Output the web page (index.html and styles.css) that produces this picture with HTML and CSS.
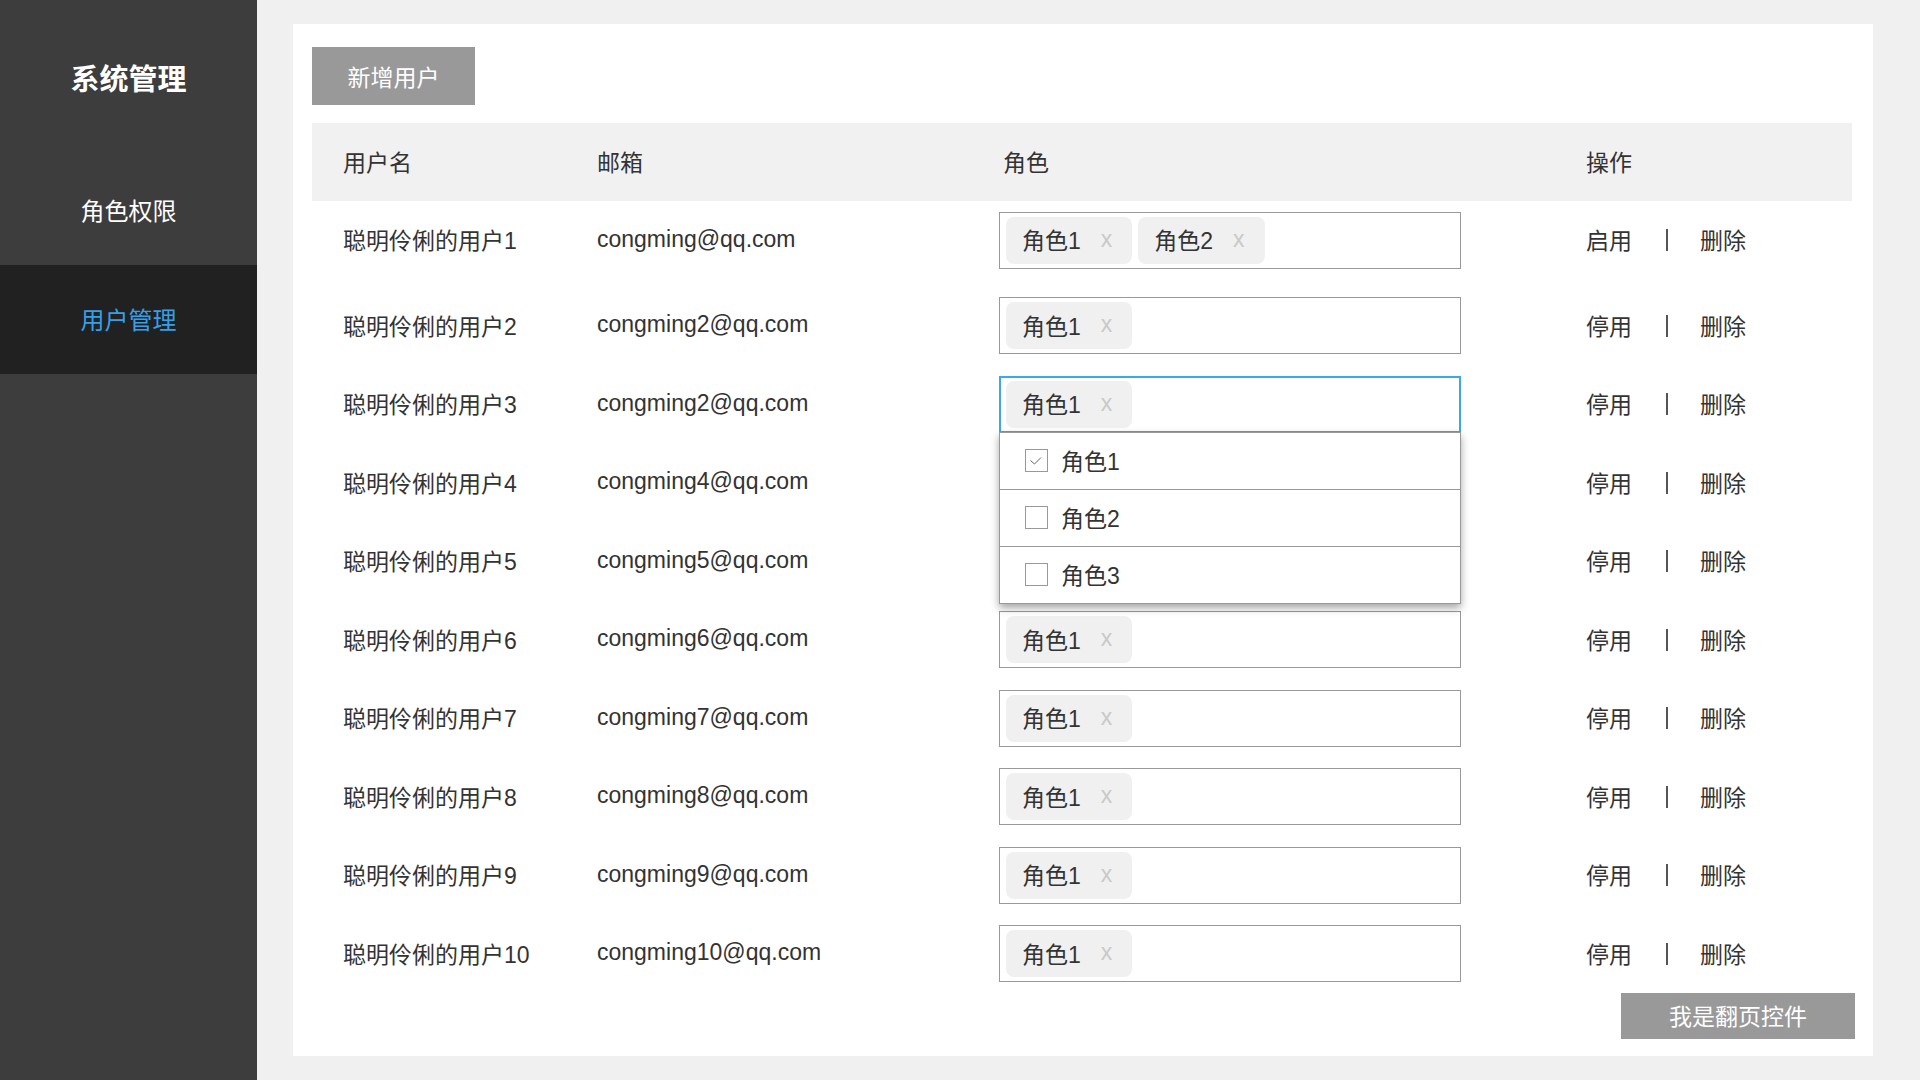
FILE: index.html
```html
<!DOCTYPE html>
<html lang="zh-CN">
<head>
  <meta charset="UTF-8"/>
  <meta name="viewport" content="width=device-width, initial-scale=1.0"/>
  <title>系统管理 - 用户管理</title>
  <link rel="stylesheet" href="styles.css">
</head>
<body>
  <aside class="sidebar">
    <div class="brand">系统管理</div>
    <div class="nav-item">角色权限</div>
    <div class="nav-item active">用户管理</div>
  </aside>

  <main class="content">
    <div class="card">
      <button class="btn-add">新增用户</button>

      <div class="table">
        <div class="row head">
          <div>用户名</div>
          <div>邮箱</div>
          <div class="role-head">角色</div>
          <div>操作</div>
        </div>

        <div class="row first">
          <div>聪明伶俐的用户1</div>
          <div>congming@qq.com</div>
          <div class="select">
            <span class="tag">角色1<i>x</i></span>
            <span class="tag">角色2<i>x</i></span>
          </div>
          <div class="ops"><span>启用</span><span class="sep"></span><span>删除</span></div>
        </div>

        <div class="row">
          <div>聪明伶俐的用户2</div>
          <div>congming2@qq.com</div>
          <div class="select"><span class="tag">角色1<i>x</i></span></div>
          <div class="ops"><span>停用</span><span class="sep"></span><span>删除</span></div>
        </div>

        <div class="row">
          <div>聪明伶俐的用户3</div>
          <div>congming2@qq.com</div>
          <div class="select open">
            <span class="tag">角色1<i>x</i></span>
            <!-- dropdown of the open selector, covers the next two rows -->
            <div class="dropdown">
              <div class="option">
                <span class="check on">
                  <svg width="23" height="23" viewBox="0 0 23 23"><polyline points="5.5,11.5 9.5,15 16,8.5" fill="none" stroke="#666" stroke-width="1"/></svg>
                </span>角色1
              </div>
              <div class="option"><span class="check"></span>角色2</div>
              <div class="option"><span class="check"></span>角色3</div>
            </div>
          </div>
          <div class="ops"><span>停用</span><span class="sep"></span><span>删除</span></div>
        </div>

        <div class="row">
          <div>聪明伶俐的用户4</div>
          <div>congming4@qq.com</div>
          <div class="select-slot"></div>
          <div class="ops"><span>停用</span><span class="sep"></span><span>删除</span></div>
        </div>

        <div class="row">
          <div>聪明伶俐的用户5</div>
          <div>congming5@qq.com</div>
          <div class="select-slot"></div>
          <div class="ops"><span>停用</span><span class="sep"></span><span>删除</span></div>
        </div>

        <div class="row">
          <div>聪明伶俐的用户6</div>
          <div>congming6@qq.com</div>
          <div class="select"><span class="tag">角色1<i>x</i></span></div>
          <div class="ops"><span>停用</span><span class="sep"></span><span>删除</span></div>
        </div>

        <div class="row">
          <div>聪明伶俐的用户7</div>
          <div>congming7@qq.com</div>
          <div class="select"><span class="tag">角色1<i>x</i></span></div>
          <div class="ops"><span>停用</span><span class="sep"></span><span>删除</span></div>
        </div>

        <div class="row">
          <div>聪明伶俐的用户8</div>
          <div>congming8@qq.com</div>
          <div class="select"><span class="tag">角色1<i>x</i></span></div>
          <div class="ops"><span>停用</span><span class="sep"></span><span>删除</span></div>
        </div>

        <div class="row">
          <div>聪明伶俐的用户9</div>
          <div>congming9@qq.com</div>
          <div class="select"><span class="tag">角色1<i>x</i></span></div>
          <div class="ops"><span>停用</span><span class="sep"></span><span>删除</span></div>
        </div>

        <div class="row">
          <div>聪明伶俐的用户10</div>
          <div>congming10@qq.com</div>
          <div class="select"><span class="tag">角色1<i>x</i></span></div>
          <div class="ops"><span>停用</span><span class="sep"></span><span>删除</span></div>
        </div>
      </div>

      <div class="pager">我是翻页控件</div>
    </div>
  </main>
</body>
</html>
```

FILE: styles.css
```css
* { box-sizing: border-box; margin: 0; padding: 0; }
body {
  font-family: "Liberation Sans", "Noto Sans CJK SC", sans-serif;
  display: flex; height: 100vh;
  background: #f0f0f0; color: #333;
}

/* sidebar */
.sidebar { width: 257px; flex-shrink: 0; background: #3d3d3d; color: #fff; }
.brand {
  height: 156px; display: flex; align-items: center; justify-content: center;
  font-size: 29px; font-weight: bold; padding-bottom: 3px;
}
.nav-item {
  height: 109px; display: flex; align-items: center; justify-content: center;
  font-size: 24px; padding-bottom: 2px;
}
.nav-item.active { background: #212121; color: #35a0ea; }

/* main card */
.content { flex: 1; padding: 24px 47px 24px 36px; }
.card { height: 100%; background: #fff; padding: 23px 18px 0 19px; }
.btn-add {
  width: 163px; height: 58px; border: none; background: #999; color: #fff;
  font-family: inherit; font-size: 23px; cursor: pointer;
}

.table { margin: 18px 3px 0 0; font-size: 23px; }
.row {
  display: grid; grid-template-columns: 254px 402px 587px 1fr;
  align-items: center; height: 78.5px; padding-left: 31px; padding-bottom: 2px;
}
.row.head { height: 78px; background: #f1f1f1; }
.row.first { margin-bottom: 7px; }
.role-head { padding-left: 4px; }

/* role selector */
.select {
  position: relative; display: flex; gap: 6px;
  width: 462px; height: 57px; padding: 4px 6px; margin-top: 2px;
  border: 1px solid #999; background: #fff;
}
.select.open { border: 2px solid #3ba7f0; padding: 3px 5px; }
.tag {
  display: inline-flex; align-items: center; gap: 20px;
  height: 47px; padding: 0 20px 2px 16px;
  background: #f0f0f0; border-radius: 8px; white-space: nowrap;
}
.tag i { font-style: normal; color: #c9c9c9; }

.dropdown {
  position: absolute; top: calc(100% + 1px); left: -2px; right: -2px; z-index: 2;
  background: #fff; border: 1px solid #999;
  box-shadow: 0 4px 8px rgba(0,0,0,.35);
}
.option {
  height: 57px; display: flex; align-items: center; gap: 13px;
  padding: 0 0 2px 25px; border-bottom: 1px solid #999;
}
.option:last-child { border-bottom: none; height: 56px; }
.check { width: 23px; height: 23px; border: 1px solid #999; display: flex; margin-top: 2px; }
.check svg { margin: -1px; }

/* operations */
.ops { display: flex; align-items: center; }
.sep { width: 2px; height: 22px; background: #555; margin: 2px 32px 0 34px; }

.pager {
  width: 234px; height: 46px; margin-left: auto;
  display: flex; align-items: center; justify-content: center;
  background: #999; color: #fff; font-size: 23px; padding-bottom: 2px;
}
```
